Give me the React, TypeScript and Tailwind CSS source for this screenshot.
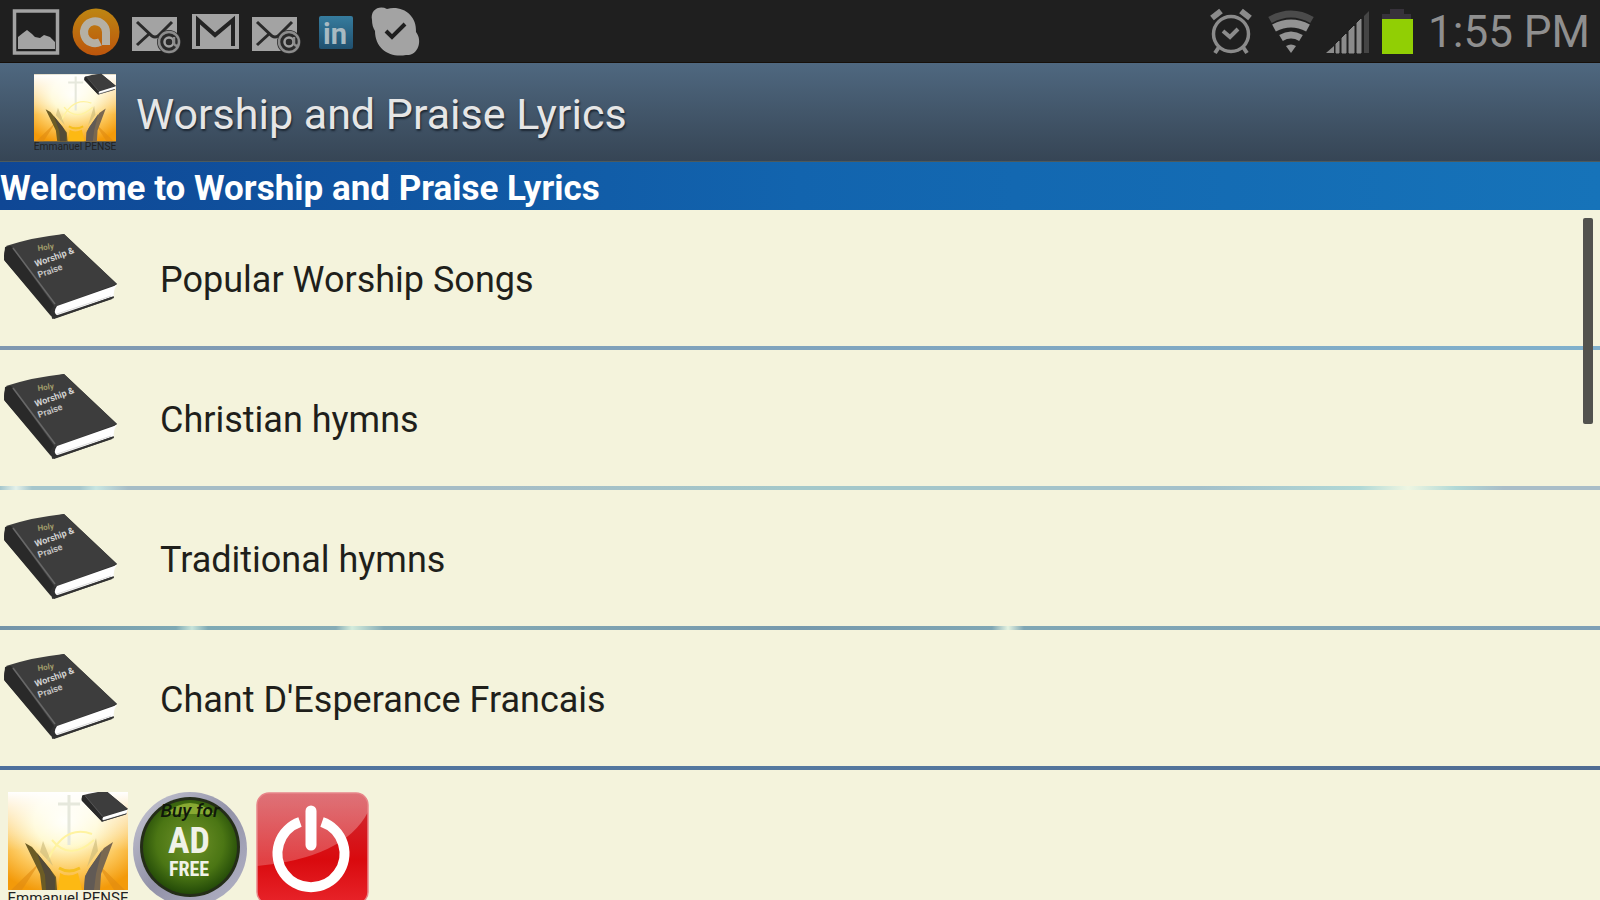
import type { ReactNode } from 'react';

const categories = [
  {
    name: 'Popular Worship Songs',
    divider: 'bg-linear-to-r from-[#7f97b0] via-[#7fa3bd] to-[#80b0cc]',
  },
  {
    name: 'Christian hymns',
    divider:
      'bg-[linear-gradient(90deg,#a5c6cc_0%,#e4f1ea_1%,#a5c6cc_2%,#a5c6cc_5%,#c8e6e2_6%,#a5bcc6_8%,#a5bcc6_30%,#a3c8ca_50%,#a3c0ca_75%,#b0d8d6_85%,#eef6e2_88%,#b0d8d6_91%,#a9bdc8_94%)]',
  },
  {
    name: 'Traditional hymns',
    divider:
      'bg-[linear-gradient(90deg,#7393a8_0%,#7ea9b4_11%,#c8e4da_12%,#7ea9b4_13%,#86acb6_21%,#d4ecdc_22%,#86acb6_24%,#7598ac_50%,#7fa6b4_62%,#e4f2e0_63%,#7fa6b4_64%,#7d9fb6_100%)]',
  },
  {
    name: "Chant D'Esperance Francais",
    divider: 'bg-linear-to-r from-[#4d6f9c] via-[#54789f] to-[#4f6b92]',
  },
];

function StatusIcon({ children }: { children: ReactNode }) {
  return (
    <svg className="w-[60px] h-[62px] shrink-0" viewBox="0 0 60 62" fill="none" aria-hidden="true">
      {children}
    </svg>
  );
}

function MailIcon() {
  return (
    <StatusIcon>
      <rect x="6" y="17" width="45" height="34" fill="#a3a3a3" />
      <path d="M11 22l15 14q3 2 6 0l14-14M11 45l12-11M35 34l5 4" stroke="#2a2a2a" strokeWidth="3" />
      <circle cx="43" cy="42" r="12" fill="#2a2a2a" />
      <circle cx="43" cy="42" r="10" stroke="#8d8d8d" strokeWidth="2.5" />
      <circle cx="43" cy="42" r="4.5" stroke="#a0a0a0" strokeWidth="2.5" />
      <path d="M48 37v6q1 4 4 2" stroke="#8d8d8d" strokeWidth="2.5" />
    </StatusIcon>
  );
}

function StatusBar() {
  return (
    <header className="h-[63px] shrink-0 bg-[#1f1f1f] border-b border-[#17100a] flex items-center justify-between pl-1.5 pr-2.5">
      <div className="flex">
        <StatusIcon>
          <rect x="8.5" y="11" width="43" height="42" stroke="#a3a3a3" strokeWidth="3.5" />
          <path d="M12 49V37l5-4 4-3 5 4 3 3 5 1 4-3 6 2 5 5v7z" fill="#a3a3a3" />
        </StatusIcon>
        <StatusIcon>
          <defs>
            <linearGradient id="avast" x1="0" y1="0" x2="0" y2="1">
              <stop offset="0" stopColor="#bd8612" />
              <stop offset="1" stopColor="#bd550c" />
            </linearGradient>
          </defs>
          <circle cx="30" cy="32" r="23.5" fill="url(#avast)" />
          <path d="M34 42a11 11 0 1 1 6-10v13" stroke="#b5b0a4" strokeWidth="8" />
        </StatusIcon>
        <MailIcon />
        <StatusIcon>
          <rect x="6" y="14" width="47" height="35" fill="#a3a3a3" />
          <path d="M12 46V20l17 15 18-15v26" stroke="#232323" strokeWidth="4" />
        </StatusIcon>
        <MailIcon />
        <StatusIcon>
          <defs>
            <linearGradient id="linkedin" x1="0" y1="0" x2="0" y2="1">
              <stop offset="0" stopColor="#367c9e" />
              <stop offset="1" stopColor="#20506f" />
            </linearGradient>
          </defs>
          <rect x="13" y="16" width="34" height="33" rx="2" fill="url(#linkedin)" />
          <text x="17" y="44" fill="#a9bac2" fontFamily="Roboto, sans-serif" fontWeight="700" fontSize="29">in</text>
        </StatusIcon>
        <StatusIcon>
          <path d="M6 20C4 10 13 5 21 9C36 5 51 15 50 32C57 41 52 56 40 55C24 58 9 49 9 31C7 28 6 24 6 20z" fill="#a3a3a3" />
          <path d="M20 31l6 6 13-13" stroke="#1f1f1f" strokeWidth="4" />
        </StatusIcon>
      </div>

      <div className="flex items-center">
        <StatusIcon>
          <circle cx="31" cy="34" r="17.5" stroke="#8b8b8b" strokeWidth="3.5" />
          <path d="M23 31l7 6 8-8" stroke="#8b8b8b" strokeWidth="4" />
          <path d="M12 18l9-7M50 18l-9-7" stroke="#8b8b8b" strokeWidth="6" />
          <path d="M19 47l-4 6M43 47l4 6" stroke="#8b8b8b" strokeWidth="4" />
        </StatusIcon>
        <StatusIcon>
          <path d="M10 20q21-12 42 0" stroke="#4b4b4b" strokeWidth="7" />
          <path d="M14 28q17-9 34 0" stroke="#939393" strokeWidth="8" />
          <path d="M21 38q10-6 20 0" stroke="#939393" strokeWidth="7" />
          <path d="M26 46q5-3 10 0l-5 7z" fill="#939393" />
        </StatusIcon>
        <StatusIcon>
          <path d="M6 53l8-7v7z" fill="#8b8b8b" />
          <path d="M16 53v-9l3-3v12zM22 53V38l4-4v19zM29 53V31l5-5v27zM37 53V23l4-4v34z" fill="#8b8b8b" stroke="#8b8b8b" />
          <path d="M44 53V16l5-5v42z" fill="#454545" />
        </StatusIcon>
        <svg className="w-12 h-[62px]" viewBox="0 0 48 62" aria-hidden="true">
          <path d="M10 9h14v5h7v5H2v-5h8z" fill="#37323b" />
          <rect x="2" y="19" width="31" height="35" fill="#91cf04" />
        </svg>
        <time className="pt-0.5 text-[44px] leading-[60px] text-[#8f8f8f]">1:55 PM</time>
      </div>
    </header>
  );
}

function Book() {
  return (
    <>
      <path d="M5 27L64 14l53 50-5 4 2 10-60 21-4-4L4 40z" fill="#303030" />
      <path d="M6 26q28-9 58-12l53 50-63 23z" fill="#3d3d3d" />
      <path d="M5 30q0-4 6-4l43 60q-5 4-3 9L5 41q-2-4 0-11z" fill="#292929" />
      <path d="M13 28l42 56" stroke="#686868" strokeWidth="1.5" />
      <path d="M57 86l60-21q-4 5-3 11L58 96q-6-3-1-10z" fill="#fff" />
      <path d="M57 94l54-18" stroke="#ddd" strokeWidth="1" />
      <path d="M52 98l60-20" stroke="#333" strokeWidth="2" />
    </>
  );
}

function BookIcon() {
  return (
    <svg className="w-[130px] h-[110px] shrink-0" viewBox="0 5 130 110" fill="none" aria-hidden="true">
      <Book />
      <g fontFamily="Roboto, sans-serif" fontWeight="700">
        <text transform="translate(38 31) rotate(-8)" fill="#a09a6a" fontSize="8">Holy</text>
        <text transform="translate(36 47) rotate(-20)" fill="#d2d2d2" fontSize="9">Worship &amp;</text>
        <text transform="translate(39 58) rotate(-20)" fill="#c4c4c4" fontSize="9">Praise</text>
      </g>
    </svg>
  );
}

function AppLogo({ className }: { className: string }) {
  return (
    <svg className={className} viewBox="0 0 120 116" fill="none" aria-hidden="true">
      <defs>
        <radialGradient id="glow" cx="0.48" cy="0.3" r="0.75">
          <stop offset="0" stopColor="#fffff8" />
          <stop offset="0.35" stopColor="#fff8c8" />
          <stop offset="0.7" stopColor="#fcc658" />
          <stop offset="1" stopColor="#f39a0a" />
        </radialGradient>
        <linearGradient id="sky" x1="0" y1="0" x2="0" y2="1">
          <stop offset="0" stopColor="#fff" />
          <stop offset="0.6" stopColor="#fff" stopOpacity="0" />
        </linearGradient>
      </defs>
      <rect width="120" height="98" fill="url(#glow)" />
      <rect width="120" height="98" fill="url(#sky)" />
      <path d="M3 98L32 70l-18 28zM117 98L88 70l18 28z" fill="#e08a10" opacity="0.6" />
      <path d="M50 98l2-17q8 5 18 0l4 17z" fill="#fdb913" />
      <path d="M51 76q10 6 21 0" stroke="#f5bf20" strokeWidth="3" />
      <path d="M61 3v50M50 12h22" stroke="#e6e8dc" strokeWidth="3" />
      <path d="M40 68q16-36 44-26M44 48q18 22 42 0" stroke="#fff3a0" strokeWidth="2" />
      <path d="M17 51l7 4 18 22 6 8 1 13H34l-2-16z" fill="#6c5c25" />
      <path d="M29 61l13 16 5 9v12h-9l-1-15z" fill="#534a38" />
      <path d="M105 50l-9 6-15 21-4 7-1 14h16l1-16z" fill="#7a6850" />
      <path d="M94 58L81 77l-4 8-1 13h10l2-16z" fill="#615a55" />
      <path d="M32 60l3-11 10 25zM90 59l-2-13-9 29z" fill="#c8b878" opacity="0.6" />
      <g transform="translate(72 -6) scale(.41 .36)">
        <Book />
      </g>
      <text x="60" y="111" textAnchor="middle" fill="#222" fontFamily="Roboto, sans-serif" fontSize="15">Emmanuel PENSE</text>
    </svg>
  );
}

function AdFreeIcon() {
  return (
    <svg className="w-[116px] h-[120px]" viewBox="0 0 116 120" aria-hidden="true">
      <defs>
        <radialGradient id="green" cx="0.5" cy="0.45" r="0.55">
          <stop offset="0" stopColor="#71932a" />
          <stop offset="0.65" stopColor="#4b7614" />
          <stop offset="1" stopColor="#234a08" />
        </radialGradient>
        <linearGradient id="rim" x1="0" y1="0" x2="1" y2="1">
          <stop offset="0" stopColor="#c9c9d6" />
          <stop offset="0.5" stopColor="#9292a8" />
          <stop offset="1" stopColor="#b6b6c8" />
        </linearGradient>
      </defs>
      <circle cx="58" cy="57" r="57" fill="url(#rim)" />
      <circle cx="58" cy="55" r="50" fill="#242d18" />
      <circle cx="58" cy="55" r="47" fill="url(#green)" />
      <path d="M34 22q24-22 48 0z" fill="#87a932" />
      <g textAnchor="middle" fontFamily="Roboto, sans-serif">
        <text x="58" y="25" fill="#10180a" fontSize="19" fontStyle="italic" fontWeight="500">Buy for</text>
        <g fontFamily="'Liberation Sans Narrow', 'Roboto Condensed', sans-serif" fontWeight="700" fill="#f0f2e8">
          <text x="57" y="61" fontSize="36">AD</text>
          <text x="57" y="84" fontSize="20">FREE</text>
        </g>
      </g>
    </svg>
  );
}

function PowerIcon() {
  return (
    <svg className="w-[113px] h-[113px]" viewBox="0 0 113 113" fill="none" aria-hidden="true">
      <defs>
        <linearGradient id="red" x1="0" y1="0" x2="0" y2="1">
          <stop offset="0" stopColor="#cf3038" />
          <stop offset="0.6" stopColor="#d90a0e" />
          <stop offset="1" stopColor="#e8242a" />
        </linearGradient>
        <linearGradient id="shine" x1="0" y1="0" x2="0" y2="1">
          <stop offset="0" stopColor="#fff" stopOpacity="0.32" />
          <stop offset="1" stopColor="#fff" stopOpacity="0.22" />
        </linearGradient>
      </defs>
      <rect x="1" y="1" width="111" height="111" rx="12" fill="url(#red)" />
      <path d="M1 74V13Q1 1 13 1h87q12 0 12 12v7Q88 66 1 74z" fill="url(#shine)" />
      <rect x="1" y="1" width="111" height="111" rx="12" stroke="#e8868a" strokeWidth="1.5" />
      <path d="M44 30a33.5 33.5 0 1 0 22 0" stroke="#fff" strokeWidth="10" />
      <path d="M55 19v34" stroke="#fff" strokeWidth="11" strokeLinecap="round" />
    </svg>
  );
}

export default function App() {
  return (
    <div className="h-screen overflow-hidden flex flex-col bg-[#f4f3dc] font-['Roboto',sans-serif]">
      <StatusBar />

      <div className="h-[99px] shrink-0 bg-linear-to-b from-[#4f6880] to-[#364555] border-b border-[#4d5a5c] flex items-center pt-1 pl-[34px] gap-5">
        <AppLogo className="w-[82px] h-[82px]" />
        <h1 className="text-[43px] leading-[52px] text-[#e6e6e6] text-shadow-[1px_2px_2px_#1c2733]">
          Worship and Praise Lyrics
        </h1>
      </div>

      <h2 className="h-12 shrink-0 bg-linear-to-r from-[#0f4795] via-[#1264ae] via-50% to-[#1673b9] text-[35px] leading-[54px] font-bold text-white">
        Welcome to Worship and Praise Lyrics
      </h2>

      <nav className="relative shrink-0">
        <ul>
          {categories.map((category) => (
            <li key={category.name}>
              <a href="#" className="h-[136px] pt-1 flex items-center gap-[30px] text-[36px] leading-[44px] text-[#1f1f1b]">
                <BookIcon />
                {category.name}
              </a>
              <div className={`h-1 ${category.divider}`} />
            </li>
          ))}
        </ul>
        {/* Scroll indicator */}
        <div className="absolute top-2 right-[7px] w-2.5 h-[206px] rounded-xs bg-[#52524e]" />
      </nav>

      <footer className="flex items-start pt-[22px] pl-2">
        <button type="button" aria-label="About">
          <AppLogo className="w-[120px] h-[116px]" />
        </button>
        <button type="button" aria-label="Buy ad free" className="ml-1">
          <AdFreeIcon />
        </button>
        <button type="button" aria-label="Exit" className="ml-2">
          <PowerIcon />
        </button>
      </footer>
    </div>
  );
}
